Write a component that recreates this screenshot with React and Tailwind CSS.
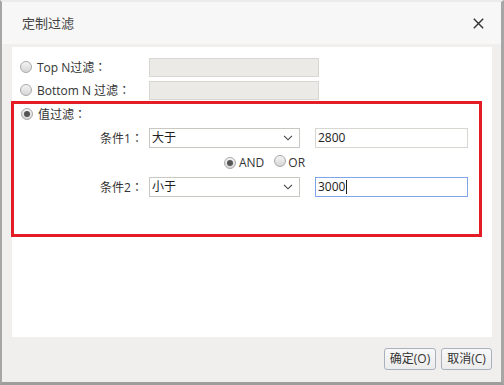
import React from "react";

const font = { fontFamily: '"Open Sans", "Noto Sans CJK SC", sans-serif' };

function Colon() {
  return <span style={{ fontFamily: '"Noto Sans CJK JP", sans-serif' }}>：</span>;
}

function Radio({ checked }) {
  return (
    <span className="relative inline-flex h-[12px] w-[12px] shrink-0 items-center justify-center rounded-full border border-[#a9a9a9] bg-gradient-to-b from-[#f4f4f4] to-[#d6d6d6]">
      {checked && <span className="h-[6px] w-[6px] rounded-full bg-[#555]" />}
    </span>
  );
}

function Chevron() {
  return (
    <svg width="10" height="6" viewBox="0 0 10 6" className="text-[#444]">
      <path d="M1 0.8 L5 4.8 L9 0.8" fill="none" stroke="currentColor" strokeWidth="1.1" />
    </svg>
  );
}

function Select({ value }) {
  return (
    <div className="flex h-[20px] w-[151px] items-center justify-between border border-[#c9c7c2] bg-white pl-[2px] pr-[6px] text-[12px] text-[#222]">
      <span>{value}</span>
      <Chevron />
    </div>
  );
}

export default function App() {
  return (
    <div
      className="flex h-[385px] w-[504px] flex-col border-b-[3px] border-l-2 border-r-[3px] border-t-2 border-b-[#9d9d9d] border-l-[#a6a6a6] border-r-[#a6a6a6] border-t-[#ececec] bg-[#f0efee] text-[#333]"
      style={font}
    >
      <div className="flex h-[42px] shrink-0 items-center justify-between bg-[#f7f7f7] pl-[20px] pr-[17px] pt-[1px]">
        <span className="text-[13px] text-[#444]">定制过滤</span>
        <svg width="11" height="11" viewBox="0 0 11 11">
          <path d="M0.8 0.8 L10.2 10.2 M10.2 0.8 L0.8 10.2" stroke="#333" strokeWidth="1.4" />
        </svg>
      </div>
      <div className="flex flex-1 flex-col pl-[10px] pr-[9px] pt-[3px]">
        <div className="flex h-[290px] flex-col bg-white pt-[10px]">
          <div className="flex h-[20px] items-center pl-[8px] text-[12px]">
            <div className="flex w-[129px] items-center gap-[5px]">
              <Radio />
              <span>Top N过滤<Colon /></span>
            </div>
            <div className="h-[19px] w-[170px] border border-[#d8d6d0] bg-[#ebeae6]" />
          </div>
          <div className="mt-[3px] flex h-[20px] items-center pl-[8px] text-[12px]">
            <div className="flex w-[129px] items-center gap-[5px]">
              <Radio />
              <span>Bottom N 过滤<Colon /></span>
            </div>
            <div className="h-[19px] w-[170px] border border-[#d8d6d0] bg-[#ebeae6]" />
          </div>
          <div className="ml-[-1px] mr-[10px] mt-[1px] flex h-[136px] flex-col border-[3px] border-[#e31c25]">
            <div className="mt-[1px] flex h-[18px] items-center gap-[5px] pl-[7px] text-[12px]">
              <Radio checked />
              <span>值过滤<Colon /></span>
            </div>
            <div className="mt-[5px] flex h-[20px] items-center text-[12px]">
              <span className="w-[129px] text-right">条件1<Colon /></span>
              <div className="ml-[6px]">
                <Select value="大于" />
              </div>
              <div className="ml-[15px] flex h-[20px] w-[153px] items-center border border-[#d8d6d1] bg-white pl-[2px] text-[12px] text-[#222]">
                2800
              </div>
            </div>
            <div className="mt-[5px] flex h-[20px] items-center pl-[210px] text-[12px]">
              <Radio checked />
              <span className="ml-[3px]">AND</span>
              <span className="ml-[10px]">
                <Radio />
              </span>
              <span className="ml-[2px]">OR</span>
            </div>
            <div className="mt-[4px] flex h-[20px] items-center text-[12px]">
              <span className="w-[129px] text-right">条件2<Colon /></span>
              <div className="ml-[6px]">
                <Select value="小于" />
              </div>
              <div className="ml-[15px] flex h-[20px] w-[153px] items-center border border-[#7ea6e6] bg-white pl-[2px] text-[12px] text-[#222]">
                3000<span className="ml-[1px] inline-block h-[14px] w-px bg-[#222]" />
              </div>
            </div>
          </div>
        </div>
        <div className="flex flex-1 items-center justify-end gap-[5px] pb-[1px]">
          <button className="h-[22px] w-[52px] rounded-[3px] border border-[#a9b1bd] bg-gradient-to-b from-[#f8f8f8] to-[#ececec] text-[12px] text-[#333]">
            确定(O)
          </button>
          <button className="h-[22px] w-[51px] rounded-[3px] border border-[#a9b1bd] bg-gradient-to-b from-[#f8f8f8] to-[#ececec] text-[12px] text-[#333]">
            取消(C)
          </button>
        </div>
      </div>
    </div>
  );
}
